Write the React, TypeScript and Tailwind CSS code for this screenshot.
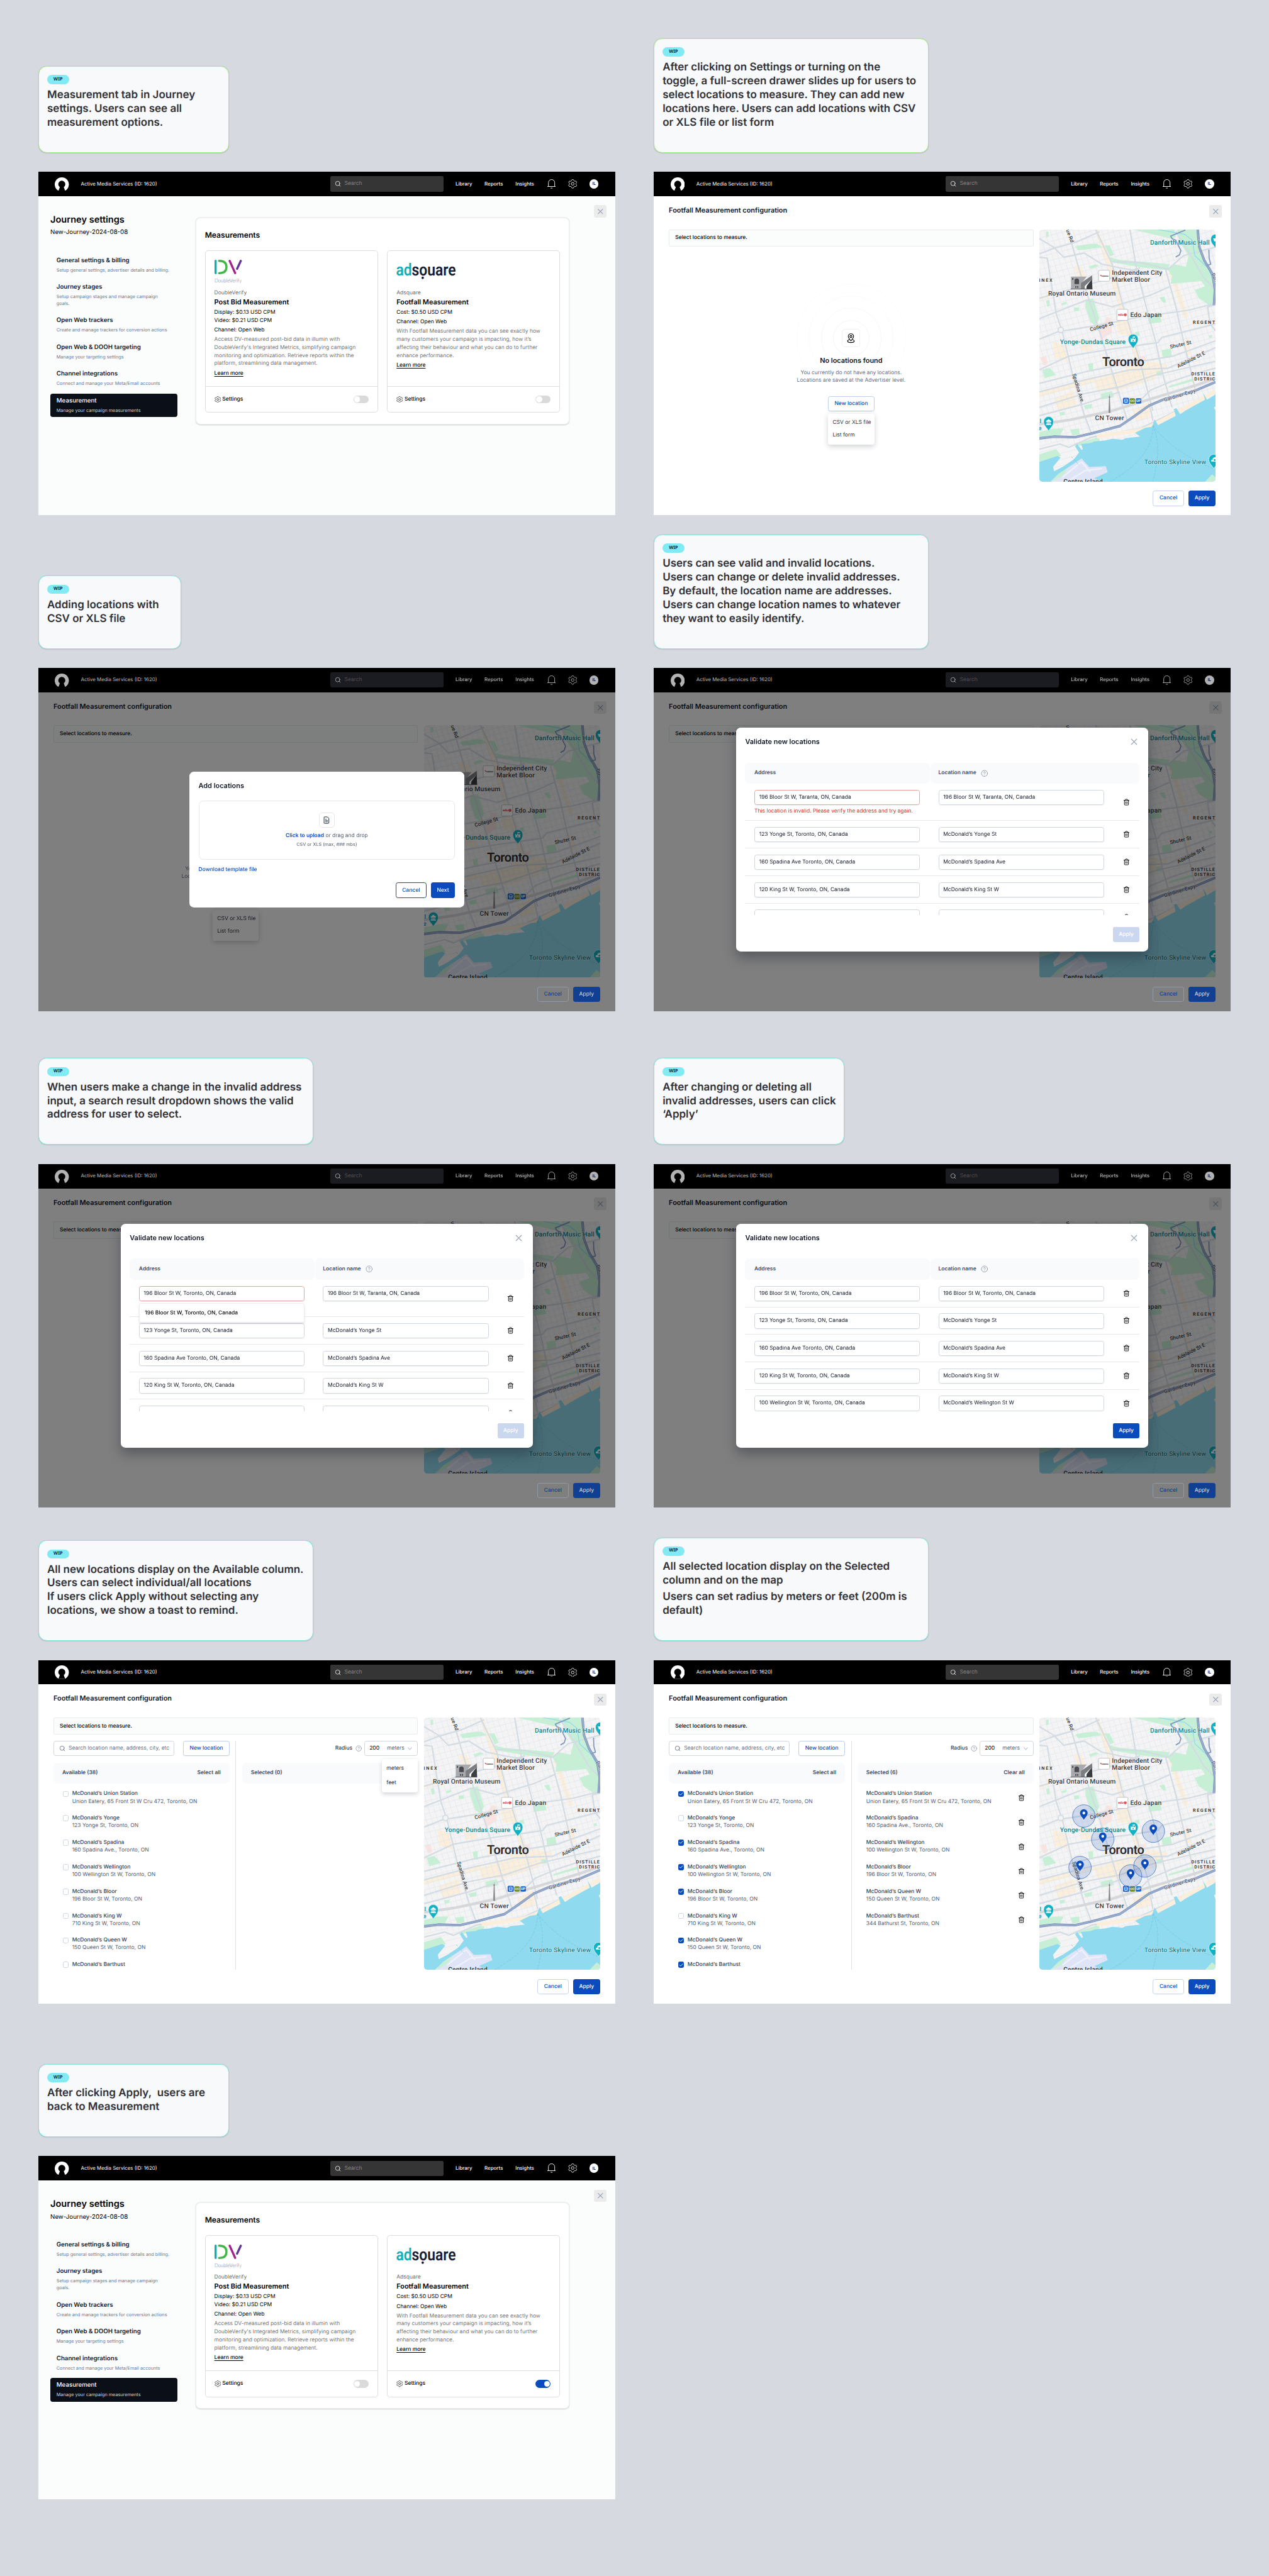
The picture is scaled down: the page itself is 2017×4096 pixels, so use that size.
import React from "react";
import { Check, ChevronDown, CircleHelp, Search, Trash2, X } from "lucide-react";

/* ---------- shared icons ---------- */

const gearPath =
  Array.from({ length: 72 }, (_, i) => {
    const a = (i / 72) * Math.PI * 2;
    const r = 9.9 + 1.5 * Math.tanh(1.8 * Math.cos(6 * a));
    return `${i ? "L" : "M"}${(12 + r * Math.sin(a)).toFixed(2)} ${(12 - r * Math.cos(a)).toFixed(2)}`;
  }).join("") + "Z";

function Gear({ className }: { className: string }) {
  return (
    <svg viewBox="0 0 24 24" fill="none" stroke="currentColor" strokeWidth="1.5" strokeLinejoin="round" className={className}>
      <path d={gearPath} />
      <circle cx="12" cy="12" r="3.6" />
    </svg>
  );
}

function Bell() {
  return (
    <svg viewBox="0 0 22 24" fill="none" stroke="currentColor" strokeWidth="1.5" className="h-6 w-[22px]">
      <path d="M2.8 19V9a8.2 8.2 0 0 1 16.4 0v10M0 19h22M8.5 23.2h5" />
    </svg>
  );
}

function Logo() {
  return (
    <svg viewBox="0 0 37 35" className="h-[35px] w-[37px]">
      <circle cx="18.5" cy="18.5" r="18.5" fill="#fff" />
      <circle cx="18.5" cy="18" r="9.2" fill="#000" />
      <path d="M14 24h9l4.5 12h-18z" fill="#000" />
    </svg>
  );
}

/* ---------- header ---------- */

function Header({ dim }: { dim?: boolean }) {
  const fade = dim ? "opacity-70" : "";
  return (
    <header className="flex h-16 shrink-0 items-center bg-black px-11 text-white">
      <div className={`flex items-center gap-[31px] ${fade}`}>
        <Logo />
        <span className="text-[13px]">Active Media Services (ID: 1620)</span>
      </div>
      <div className={`ml-auto flex h-10 w-[296px] items-center gap-2 rounded px-3 ${dim ? "bg-[#1b1c21] text-[#4d4d50]" : "bg-[#353535] text-[#858585]"}`}>
        <Search className={`size-[17px] text-white ${fade}`} strokeWidth={1.8} />
        <span className="text-sm">Search</span>
      </div>
      <nav className={`ml-8 flex items-center text-[13px] font-medium ${fade}`}>
        <span className="w-[43px]">Library</span>
        <span className="ml-[33px] w-[49px]">Reports</span>
        <span className="ml-8 w-[49px]">Insights</span>
        <span className="ml-[34px]"><Bell /></span>
        <Gear className="ml-[33px] size-6" />
        <span className="ml-8 flex size-6 items-center justify-center rounded-full bg-white text-[11px] text-black">IL</span>
      </nav>
    </header>
  );
}

function CloseButton() {
  return (
    <div className="flex size-8 items-center justify-center rounded-[5px] bg-[#ebebeb] text-[#94a1b5]">
      <X className="size-6" strokeWidth={1.9} />
    </div>
  );
}

/* ---------- notes ---------- */

function Note({ width, tone, children }: { width: string; tone: "green" | "cyan"; children: React.ReactNode }) {
  return (
    <div className={`${width} ${tone === "green" ? "border-[#a5e887]" : "border-[#80e8de]"} rounded-[22px] border-2 bg-[#f8f9fb] px-[22px] pt-[22px] pb-[58px] shadow-sm`}>
      <span className="flex h-6 w-[57px] items-center justify-center rounded-full bg-[#81ebf3] font-['Noto_Sans',sans-serif] text-xs font-bold text-[#0d2d38]">WIP</span>
      <div className="mt-3 flex flex-col gap-2 text-[28px] leading-9 font-semibold whitespace-nowrap text-[#303136]">{children}</div>
    </div>
  );
}

/* ---------- journey settings ---------- */

const menu = [
  ["General settings & billing", "Setup general settings, advertiser details and billing."],
  ["Journey stages", "Setup campaign stages and manage campaign goals."],
  ["Open Web trackers", "Create and manage trackers for conversion actions"],
  ["Open Web & DOOH targeting", "Manage your targeting settings"],
  ["Channel integrations", "Connect and manage your Meta/Email accounts"],
  ["Measurement", "Manage your campaign measurements"],
];

function DoubleVerifyLogo() {
  return (
    <svg viewBox="0 0 72 72" className="h-[72px] w-[72px] overflow-visible" fill="none" strokeWidth="5.6" strokeLinecap="round">
      <path d="M2.8 2.8v32.4" stroke="#10aeb0" />
      <path d="M11.8 2.8c13 0 19.4 5 19.4 16.2s-6.4 16.2-19.4 16.2" stroke="#43b649" />
      <path d="M39.6 2.8 54 35" stroke="#a3238e" />
      <path d="M68.8 2.8 59 24" stroke="#63359a" />
      <text x="0" y="59" fill="#6d6e71" fontSize="14" textLength="71" lengthAdjust="spacingAndGlyphs" className="font-['Lato'] font-light">DoubleVerify</text>
    </svg>
  );
}

function AdsquareLogo() {
  return (
    <svg viewBox="0 0 156 42" className="h-[42px] w-[156px] overflow-visible" aria-label="adsquare">
      <text x="-1" y="32" fontSize="44" textLength="157" lengthAdjust="spacingAndGlyphs" className="font-['Roboto'] font-semibold">
        <tspan fill="#10aeb9">ad</tspan>
        <tspan fill="#171c33">souare</tspan>
      </text>
      <circle cx="69" cy="37.5" r="3.2" fill="#171c33" />
    </svg>
  );
}

function Toggle({ on }: { on?: boolean }) {
  return (
    <span className={`flex h-5 w-10 items-center rounded-full p-0.5 ${on ? "justify-end bg-[#0a4bbd]" : "bg-[#dadada]"}`}>
      <span className="size-4 rounded-full bg-white" />
    </span>
  );
}

function ProductCard(props: { logo: React.ReactNode; vendor: string; title: string; prices: string[]; copy: string[]; on?: boolean }) {
  return (
    <article className="flex h-[425px] w-[455px] flex-col rounded-lg border border-[#dcdee2] bg-white">
      <div className="flex grow flex-col px-[23px] pt-[23px] text-sm leading-[21px]">
        <div className="flex h-[77px] items-start">{props.logo}</div>
        <p className="text-[#6d6d6d]">{props.vendor}</p>
        <h3 className="text-lg leading-[26px] font-semibold">{props.title}</h3>
        <div className="mt-1">{props.prices.map((p) => <p key={p}>{p}</p>)}</div>
        <p className="mt-1">Channel: Open Web</p>
        <div className="mt-1 whitespace-nowrap text-[#757575]">{props.copy.map((c) => <p key={c}>{c}</p>)}</div>
        <p className="mt-1 font-medium underline underline-offset-4">Learn more</p>
      </div>
      <div className="flex h-[68px] items-center justify-between border-t border-[#dcdee2] px-[23px]">
        <span className="flex items-center gap-1 text-sm font-medium"><Gear className="size-[17px]" />Settings</span>
        <Toggle on={props.on} />
      </div>
    </article>
  );
}

function JourneyScreen({ footfall }: { footfall?: boolean }) {
  return (
    <Frame>
      <div className="flex grow bg-[#fbfcfc]">
        <aside className="w-[364px] pt-[46px] pl-8">
          <h1 className="text-2xl leading-8 font-semibold">Journey settings</h1>
          <p className="mt-[7px] text-base leading-6">New-Journey-2024-08-08</p>
          <ul className="mt-[41px] flex flex-col gap-2">
            {menu.map(([title, text], i) => (
              <li key={title} className={`flex flex-col gap-1 rounded-md px-4 py-2 ${i === 5 ? "bg-[#0b0f18] text-white" : "text-[#11182b]"}`}>
                <span className={`text-base ${i === 5 ? "font-medium" : "font-semibold"}`}>{title}</span>
                <span className={`text-xs leading-[18px] ${i === 5 ? "text-[#cfd4dd]" : "text-[#6c7a94]"}`}>{text}</span>
              </li>
            ))}
          </ul>
        </aside>
        <section className="mt-[57px] ml-12 flex h-[541px] w-[980px] flex-col rounded-xl border border-[#eceef0] bg-white px-[23px] shadow-[0_1px_3px_rgba(16,24,40,0.2)]">
          <h2 className="mt-[31px] text-xl leading-7 font-semibold">Measurements</h2>
          <div className="mt-[25px] flex gap-6">
            <ProductCard
              logo={<DoubleVerifyLogo />}
              vendor="DoubleVerify"
              title="Post Bid Measurement"
              prices={["Display: $0.13 USD CPM", "Video: $0.21 USD CPM"]}
              copy={[
                "Access DV-measured post-bid data in illumin with",
                "DoubleVerify's Integrated Metrics, simplifying campaign",
                "monitoring and optimization. Retrieve reports within the",
                "platform, streamlining data management.",
              ]}
            />
            <ProductCard
              logo={<span className="pt-2.5"><AdsquareLogo /></span>}
              vendor="Adsquare"
              title="Footfall Measurement"
              prices={["Cost: $0.50 USD CPM"]}
              copy={[
                "With Footfall Measurement data you can see exactly how",
                "many customers your campaign is impacting, how it’s",
                "affecting their behaviour and what you can do to further",
                "enhance performance.",
              ]}
              on={footfall}
            />
          </div>
        </section>
        <div className="ml-auto pt-6 pr-6"><CloseButton /></div>
      </div>
    </Frame>
  );
}

/* ---------- map ---------- */

const pts = (s: string) =>
  s
    .split(" ")
    .map((p) => p.split(",").map(Number))
    .map(([x, y]) => `${((x - 68) / 3).toFixed(1)},${((y - 47) / 2.239).toFixed(1)}`)
    .join(" ");

const parks = [
  "1150,47 1300,47 1340,180 1452,330 1452,470 1400,490 1320,450 1290,400 1370,380 1340,350 1100,365 1110,320 1080,285 1120,250 1220,265 1240,200 1170,120",
  "620,210 700,225 1090,250 1080,285 880,270 640,240",
  "350,145 430,135 520,130 560,150 430,165 370,168",
  "580,140 620,140 655,195 625,205",
  "800,47 1130,47 1140,90 1100,100 960,75",
  "455,265 510,250 540,260 470,278",
  "430,460 490,450 540,570 510,610 470,590 430,500",
  "920,560 1010,530 1030,590 930,600",
  "1010,445 1050,440 1065,475 1040,475",
  "1030,755 1100,745 1110,790 1035,795",
  "990,880 1030,875 1030,905 990,905",
  "450,835 490,830 490,880 460,875",
  "90,870 150,860 200,900 110,920",
  "550,1010 640,995 655,1030 560,1045",
  "68,1235 180,1215 260,1215 230,1255 68,1265",
  "310,1220 380,1215 385,1250 330,1255",
  "68,1365 200,1335 240,1375 68,1415",
  "340,1310 540,1262 540,1292 350,1320",
  "820,650 850,645 855,670 825,675",
  "120,60 140,58 140,90 122,90",
  "415,1080 480,1070 480,1095 430,1100",
  "1085,965 1280,920 1280,935 1085,975",
  "240,480 280,470 280,485 245,492",
  "340,505 380,503 380,525 340,525",
  "120,465 145,460 150,495 130,500",
  "1400,670 1425,665 1425,680 1405,683",
  "225,1120 265,1115 268,1135 232,1138",
];
const shops = [
  "505,47 530,47 640,250 720,480 800,640 870,800 820,810 700,520 600,270",
  "670,590 745,580 765,660 690,665",
  "170,700 270,730 290,820 190,800",
  "340,270 400,265 440,330 380,345",
  "68,450 150,425 155,440 68,462",
  "1085,300 1125,300 1240,560 1205,570",
  "500,930 930,820 1080,840 960,930 700,990 520,990",
  "68,1000 500,910 510,940 68,1030",
  "180,1040 340,990 360,1070 220,1110",
  "800,1110 930,1060 940,1150 830,1170",
  "730,840 860,800 900,860 780,900",
  "380,690 470,720 480,760 400,760",
  "1190,700 1240,690 1260,780 1220,790",
];
const hospitals = ["540,640 600,560 630,565 640,650 560,690", "75,800 120,790 135,835 100,845", "860,795 900,790 905,815 870,820"];
const mainRoads = [
  "68,190 170,160 360,120 540,60",
  "68,100 180,150 260,210 420,185 560,250 720,275 860,290",
  "68,210 130,215 200,540 250,650 330,900 420,1130 480,1250",
  "290,47 400,330 540,640 660,930 760,1170",
  "510,47 640,250 720,480 850,800 960,1110",
  "780,47 830,270 900,480 980,700 1040,900 1110,1090",
  "1060,280 1140,500 1200,700 1260,880 1290,980",
  "640,235 860,240 1080,280 1200,200 1452,150",
  "68,450 300,400 640,330 860,270",
  "68,570 440,460 640,500 930,435 1100,380",
  "68,690 220,645 520,610 860,560 1240,520 1452,480",
  "68,870 300,790 620,750 820,730 1000,710 1030,680 1452,600",
  "68,1000 420,930 780,870 1080,860 1452,740",
  "68,950 440,880 780,830 1120,790 1452,700",
  "68,1090 420,1010 700,970 980,900 1452,820",
  "860,1050 940,990 1100,940 1300,890 1452,860",
  "1140,60 1250,190 1360,330 1452,400",
  "68,1335 230,1305 300,1325 480,1265 860,1215 1452,1000",
  "930,1070 950,1130 960,1170",
  "68,1140 420,1070 700,1000",
  "1452,330 1440,490 1390,500 1410,600 1452,640",
];
const waterfront =
  "68,1410 210,1375 235,1385 175,1440 185,1465 260,1435 340,1395 380,1355 350,1320 365,1305 400,1340 410,1335 395,1305 470,1300 500,1290 580,1285 640,1275 720,1280 750,1270 860,1262 820,1240 900,1210 950,1205 958,1195 975,1160 1000,1195 1140,1140 1125,1100 1145,1095 1175,1130 1215,1110 1370,1045 1355,1005 1385,1045 1452,1015 1452,1527 68,1527";
const expressway = "68,1272 180,1262 350,1265 470,1245 700,1200 800,1150 930,1080 1040,1045 1300,990 1452,942";
const parkway = "1312,47 1325,150 1365,230 1430,310 1448,400 1440,490";
const ramps = ["1215,50 1100,85 1110,100 1140,110 1180,170 1170,195 1140,208", "1400,165 1402,215 1415,250 1385,258"];
const islands = "155,1527 220,1480 400,1390 460,1440 590,1435 605,1470 500,1505 560,1527";

const crossStreets = Array.from({ length: 44 }, (_, i) => {
  const x = -480 + i * 45;
  return `${x},47 ${x + 230},600 ${x + 510},1300`;
});
const sideStreets = Array.from({ length: 40 }, (_, i) => {
  const y = 60 + i * 37;
  return `68,${y} 700,${y - 120} 1452,${y - 270}`;
});

function Lines({ items, color, width }: { items: string[]; color: string; width: number }) {
  return (
    <g fill="none" stroke={color} strokeWidth={width} strokeLinejoin="round">
      {items.map((s) => <polyline key={s} points={pts(s)} />)}
    </g>
  );
}
function Areas({ items, color }: { items: string[]; color: string }) {
  return <g fill={color}>{items.map((s) => <polygon key={s} points={pts(s)} />)}</g>;
}

function PlacePin({ x, y, children }: { x: number; y: number; children: React.ReactNode }) {
  return (
    <g transform={`translate(${x} ${y})`}>
      <path d="M0 24C-3 16-13 11-13-1a13 13 0 0 1 26 0C13 11 3 16 0 24Z" fill="#12b1c4" stroke="#fff" strokeWidth="1" />
      <g fill="#fff">{children}</g>
    </g>
  );
}

const teal = "#0f828f";
const ink = "#3a3b3f";
/* text, x, y, size, length, colour, rotation, weight */
const labels: [string, number, number, number, number, string, number, number][] = [
  ["Danforth Music Hall", 290, 39, 17, 156, teal, 0, 500],
  ["Independent City", 190, 118, 17, 132, ink, 0, 500],
  ["Market Bloor", 190, 137, 17, 100, ink, 0, 500],
  ["Royal Ontario Museum", 23, 173, 17, 177, ink, 0, 500],
  ["Edo Japan", 238, 229, 17, 82, ink, 0, 500],
  ["College St", 134, 267, 14, 63, ink, -16, 500],
  ["Yonge-Dundas Square", 54, 300, 17, 172, teal, 0, 500],
  ["Shuter St", 343, 312, 13.5, 57, ink, -13, 500],
  ["Adelaide St E", 364, 363, 13.5, 80, ink, -27, 500],
  ["Toronto", 165, 357, 33, 110, "#2b2c30", 0, 600],
  ["REGENT PARK", 402, 248, 12, 104, ink, 0, 700],
  ["ANNEX", -17, 136, 12, 51, ink, 0, 700],
  ["DISTILLERY", 398, 382, 12, 80, ink, 0, 700],
  ["DISTRICT", 406, 396, 12, 63, ink, 0, 700],
  ["Spadina Ave.", 86, 379, 13.5, 80, ink, 73, 500],
  ["Avenue Rd", 59, -28, 13.5, 67, ink, 70, 500],
  ["Gardiner Expy", 328, 451, 13.5, 86, "#4b5d80", -17, 500],
  ["Don Valley Pkwy", 450, 117, 13.5, 95, "#4b5d80", 64, 500],
  ["CN Tower", 146, 499, 17, 76, ink, 0, 500],
  ["Toronto Skyline View", 275, 614, 17, 162, teal, 0, 500],
  ["Centre Island", 63, 665, 17, 103, "#2b2c30", 0, 600],
  ["l", 1, 507, 16, 4, teal, 0, 500],
  ["e", -3, 525, 16, 8, teal, 0, 500],
];

const drops = [[116.5, 258], [166, 319], [298.5, 298], [106.5, 393], [276.5, 389], [239, 415]];

function CityMap({ pinned }: { pinned?: boolean }) {
  return (
    <div className="h-[661px] w-[461px] shrink-0 overflow-hidden rounded-lg">
      <svg viewBox="0 0 461 661" className="h-full w-full font-['Roboto',sans-serif]">
        <rect width="461" height="661" fill="#f5f4f4" />
        <Areas items={shops} color="#fbefdb" />
        <Areas items={hospitals} color="#fbe4e0" />
        <Lines items={crossStreets} color="#dfe5ee" width={1.1} />
        <Lines items={sideStreets} color="#dfe5ee" width={1.1} />
        <Areas items={parks} color="#c6efd6" />
        <Lines items={mainRoads} color="#d3dbe3" width={3.6} />
        <circle cx="56" cy="263" r="7" fill="#f5f4f4" stroke="#d3dbe3" strokeWidth="3" />
        <Lines items={["68,1190 300,1165 620,1115 860,1060 1300,960 1452,920"]} color="#d6d7da" width={7} />
        <Lines items={["1000,47 1210,75 1270,110 1290,200 1390,270 1452,370"]} color="#8fdaef" width={2} />
        <Lines items={["520,1262 860,1225 950,1200 1300,1060 1452,995"]} color="#fbefdb" width={10} />
        <polygon points={pts(waterfront)} fill="#90daef" />
        <polygon points={pts("1440,1090 1452,1085 1452,1110")} fill="#fbefdb" />
        <polygon points={pts(islands)} fill="#dfe5f6" />
        <Lines items={["250,1500 400,1410 470,1470", "300,1520 430,1460 560,1450"]} color="#eef1fa" width={4} />
        <Areas items={["1370,1527 1425,1483 1452,1500 1452,1527", "155,1527 220,1480 300,1440 240,1500"]} color="#c6efd6" />
        <g fill="none" stroke="#66c8e2" strokeWidth="1.2" strokeDasharray="6 3">
          <path d="M298 514C330 560 390 600 457 627M298 514C318 560 310 610 297 661M298 514C296 580 250 625 184 661M84 595l20 22" />
        </g>
        <Lines items={[expressway, parkway]} color="#7288b0" width={6.4} />
        <Lines items={[expressway, parkway]} color="#96abcc" width={4.6} />
        <Lines items={ramps} color="#8299c0" width={3} />

        <g>
          <path d="M83 156v-33h26l3 33zM106 156v-33l18 0-12 16z" fill="#a9aaad" />
          <path d="M92 143v-9a6 6 0 0 1 12 0v9zM86 127h3v5h-3zM94 148h3v5h-3zM99 148h3v5h-3z" fill="#4b4c50" />
          <path d="M109 140l29-20 1 12-14 14-6 10h-10z" fill="#7d7e82" />
          <path d="M121 156l2-11 15-13 1 24z" fill="#3c3d41" />
          <path d="M119 156v-8l17-16-12 16-1 8z" fill="#fff" />
          <path d="M82 156h57" stroke="#4b4c50" strokeWidth="1.5" />
        </g>
        <g fill="#fff" stroke="#a9adb5" strokeWidth="1.2">
          <rect x="155" y="106.5" width="29" height="29" rx="3" />
          <rect x="203" y="209" width="29" height="29" rx="3" />
        </g>
        <path d="M158.5 119h4v4z" fill="#dc2626" />
        <text x="163" y="123" fontSize="4.5" textLength="18" fontWeight="700" fill="#2f2f33">CityMarket</text>
        <text x="206.5" y="226" fontSize="8" textLength="14" fontWeight="700" fill="#dc2626">edo</text>
        <circle cx="225" cy="223.5" r="4" fill="#dc5a5a" />

        <path d="M183.700 423l1 14h2l-.5 4h-1l1.500 40h-6l1.500-40h-1l-.5-4h2z" fill="#88898c" stroke="#fff" strokeWidth=".6" />
        <g>
          <rect x="219" y="441" width="16" height="16" rx="3" fill="#1565d8" />
          <rect x="223" y="444.5" width="8" height="8" rx="1.5" fill="none" stroke="#fff" strokeWidth="1.5" />
          <path d="M223 449h8M224 455l1-2M230 455l-1-2" stroke="#fff" strokeWidth="1.3" />
          <rect x="236.5" y="442" width="14" height="14" rx="3" fill="#6b8f1c" />
          <circle cx="240.8" cy="449" r="2.2" fill="none" stroke="#fff" strokeWidth="1.3" />
          <circle cx="246.4" cy="449" r="2.2" fill="none" stroke="#fff" strokeWidth="1.3" />
          <rect x="252.5" y="442" width="14.5" height="14" rx="3" fill="#1565d8" />
          <text x="259.7" y="452.3" fontSize="9" fontWeight="700" fill="#fff" textAnchor="middle">UP</text>
        </g>

        {labels.map(([t, x, y, size, len, color, rot, weight]) => (
          <text
            key={t}
            transform={`translate(${x} ${y}) rotate(${rot})`}
            fontSize={size}
            fontWeight={weight}
            textLength={len}
            fill={color}
            stroke="#ffffff"
            strokeOpacity="0.7"
            strokeWidth="1.8"
            strokeLinejoin="round"
            paintOrder="stroke"
          >
            {t}
          </text>
        ))}

        <PlacePin x={245.7} y={288}><path d="M-6.5-3h2v2h3v-2h3v2h3v-2h2V6h-13zM-1-8h6v3H0v2h-1z" /><circle cy="3" r="1.8" fill="#12b1c4" /></PlacePin>
        <PlacePin x={24.3} y={504}><path d="M-7-2 0-7 7-2v2H-7zM-5 1H5v6H-5zM-7 6H7v2H-7z" /><path d="M-2.5 6V2L0 4.500 2.500 2v4" stroke="#12b1c4" strokeWidth="1.2" fill="none" /></PlacePin>
        <PlacePin x={462} y={26}><path d="M-7-3h9v8h-6z" /></PlacePin>
        <PlacePin x={457} y={603}><path d="M-3-4h2l1-2h5v11h-12V0h4z" /><circle cx="2" cy="1" r="2.5" fill="#12b1c4" /></PlacePin>

        {pinned &&
          drops.map(([x, y]) => (
            <g key={x} transform={`translate(${x} ${y})`}>
              <circle r="29.5" fill="#0a4bbd" fillOpacity="0.15" stroke="#0a4bbd" strokeWidth="1" />
              <path d="M0 10C-2 5-10-1-10-8a10 10 0 0 1 20 0C10-1 2 5 0 10Z" fill="#0a4bbd" />
              <circle cy="-8" r="3.6" fill="#fff" />
            </g>
          ))}
      </svg>
    </div>
  );
}

/* ---------- configuration drawer ---------- */

function Frame({ dim, children }: { dim?: boolean; children: React.ReactNode }) {
  return (
    <div className="relative mt-[50px] flex h-[900px] w-[1512px] flex-col overflow-hidden bg-white text-black">
      <Header dim={dim} />
      {children}
    </div>
  );
}

function ConfigScreen({ pinned, modal, children }: { pinned?: boolean; modal?: React.ReactNode; children?: React.ReactNode }) {
  const dim = Boolean(modal);
  return (
    <Frame dim={dim}>
      <div className="flex items-start justify-between pt-6 pr-6 pl-10">
        <h1 className="-mt-px text-lg leading-7 font-semibold text-[#101828]">Footfall Measurement configuration</h1>
        <CloseButton />
      </div>
      <div className="mt-[31px] flex h-[661px] gap-4 pl-10">
        <div className="flex w-[955px] flex-col">
          <div className="flex h-[45px] shrink-0 items-center rounded border border-[#e9ebed] bg-[#fbfcfc] px-[15px] text-sm font-medium">Select locations to measure.</div>
          {children ?? <EmptyState />}
        </div>
        <CityMap pinned={pinned} />
      </div>
      {dim && <div className="absolute inset-x-0 top-16 bottom-0 bg-black/50" />}
      <div className="relative mt-6 flex justify-end gap-3 pr-10">
        <span className={`flex h-10 items-center rounded-md border px-4 text-sm font-medium ${dim ? "border-[#9299a8] text-[#123f90]" : "border-[#c4d5f1] text-[#0a4bbd]"}`}>Cancel</span>
        <span className={`flex h-10 items-center rounded-md px-4 text-sm font-medium ${dim ? "bg-[#113f92] text-[#c8cdd8]" : "bg-[#0a4bbd] text-white"}`}>Apply</span>
      </div>
      {modal && <div className="absolute inset-0 flex items-center justify-center">{modal}</div>}
    </Frame>
  );
}

function EmptyState() {
  return (
    <div className="flex flex-col items-center">
      <div className="relative mt-[216px] flex size-12 items-center justify-center rounded-lg border border-[#eff1f4] bg-white">
        <span className="absolute -inset-[121px] rounded-full border border-[#fcfcfd]" />
        <span className="absolute -inset-[89px] rounded-full border border-[#fafbfb]" />
        <span className="absolute -inset-[57px] rounded-full border border-[#f7f8f9]" />
        <span className="absolute -inset-[25px] rounded-full border border-[#f4f5f7]" />
        <svg viewBox="0 0 24 24" className="size-7" fill="none" stroke="#000" strokeWidth="1.6" strokeLinejoin="round">
          <path d="M12 18.500C10.500 15.500 6 12.500 6 8.500a6 6 0 0 1 12 0c0 4-4.500 7-6 10Z" />
          <circle cx="12" cy="8.500" r="2.300" />
          <path d="M8.500 15.500C6 16.200 4.500 17.300 4.500 18.700c0 1.900 3.400 3.300 7.500 3.300s7.500-1.400 7.500-3.300c0-1.400-1.500-2.500-4-3.200" />
        </svg>
      </div>
      <h2 className="relative mt-[21px] text-lg leading-7 font-semibold text-[#101828]">No locations found</h2>
      <p className="relative mt-2 text-center text-sm text-[#667085]">
        You currently do not have any locations.
        <br />
        Locations are saved at the Advertiser level.
      </p>
      <div className="relative mt-[31px]">
        <NewLocation />
        <div className="absolute inset-x-0 top-[46px] flex h-[82px] flex-col rounded-md bg-white py-2 pl-3 text-sm whitespace-nowrap text-[#282f3d] shadow-[0_4px_14px_rgba(16,24,40,0.2)]">
          <span className="py-1.5 leading-[21px]">CSV or XLS file</span>
          <span className="py-1.5 leading-[21px]">List form</span>
        </div>
      </div>
    </div>
  );
}

function NewLocation() {
  return (
    <span className="flex h-10 w-[121px] items-center justify-center rounded-md border border-[#bccfee] bg-white text-sm font-medium text-[#0a4bbd] shadow-xs">
      New location
    </span>
  );
}

/* ---------- modals ---------- */

function UploadModal() {
  return (
    <div className="flex h-[357px] w-[720px] flex-col rounded-xl bg-white px-6 pt-6 text-sm">
      <h2 className="text-lg leading-7 font-semibold text-[#101828]">Add locations</h2>
      <div className="mt-6 flex h-[156px] flex-col items-center rounded-xl border border-[#e4e7ec] pt-[30px]">
        <span className="flex size-10 items-center justify-center rounded-lg border border-[#e4e7ec]">
          <svg viewBox="0 0 20 20" className="size-5" fill="none" stroke="#1f2937" strokeWidth="1.6" strokeLinejoin="round">
            <path d="M4.500 1.500h7.500l4 4v11a2 2 0 0 1-2 2h-9.500a1 1 0 0 1-1-1v-15a1 1 0 0 1 1-1zM6.500 7.500h3.500M6.500 11h7M6.500 14.500h7" />
          </svg>
        </span>
        <p className="mt-3 text-[#535c6e]"><b className="font-semibold text-[#0a4bd0]">Click to upload</b> or drag and drop</p>
        <p className="mt-1 text-xs leading-[18px] text-[#535c6e]">CSV or XLS (max, ### mbs)</p>
      </div>
      <p className="mt-4 font-medium text-[#0a4bbd]">Download template file</p>
      <div className="mt-[23px] flex justify-end gap-3 font-medium">
        <span className="flex h-[41px] items-center rounded-md border border-[#0a4bbd] px-[15px] text-[#0a4bbd]">Cancel</span>
        <span className="flex h-[41px] items-center rounded-md bg-[#0a4bbd] px-4 text-white">Next</span>
      </div>
    </div>
  );
}

function Field({ value, invalid }: { value: string; invalid?: boolean }) {
  return (
    <span className={`flex h-10 w-[434px] items-center rounded-md border px-[11px] text-sm text-[#101828] shadow-xs ${invalid ? "border-[#f0a09a]" : "border-[#d0d6e0]"}`}>
      {value}
    </span>
  );
}

const addresses = [
  ["123 Yonge St, Toronto, ON, Canada", "McDonald’s Yonge St"],
  ["160 Spadina Ave Toronto, ON, Canada", "McDonald’s Spadina Ave"],
  ["120 King St W, Toronto, ON, Canada", "McDonald’s King St W"],
];

function ValidateModal({ state }: { state: "error" | "editing" | "valid" }) {
  const ok = state === "valid";
  const first = [
    state === "error" ? "196 Bloor St W, Taranta, ON, Canada" : "196 Bloor St W, Toronto, ON, Canada",
    ok ? "196 Bloor St W, Toronto, ON, Canada" : "196 Bloor St W, Taranta, ON, Canada",
  ];
  const last = ok ? ["100 Wellington St W, Toronto, ON, Canada", "McDonald’s Wellington St W"] : ["", ""];
  return (
    <div className="flex h-[587px] w-[1080px] flex-col rounded-xl bg-white p-6 shadow-[0_16px_32px_rgba(16,24,40,0.35)]">
      <div className="flex items-center justify-between">
        <h2 className="text-lg leading-7 font-semibold text-[#101828]">Validate new locations</h2>
        <X className="size-7 text-[#94a1b5]" strokeWidth={1.6} />
      </div>
      <div className="mt-10 flex h-[55px] shrink-0 gap-0.5 text-sm font-semibold text-[#475069]">
        <span className="flex w-[484px] items-center rounded-xl bg-[#f9fafc] pl-6">Address</span>
        <span className="flex grow items-center gap-3 rounded-xl bg-[#f9fafc] pl-5">Location name <CircleHelp className="size-[19px] text-[#8a94a8]" strokeWidth={1.8} /></span>
      </div>
      <div className="h-[344px] shrink-0 overflow-hidden">
        {[first, ...addresses, last].map(([address, name], i) => {
          const flagged = i === 0 && !ok;
          return (
            <div key={address + i} className={`relative flex border-[#e6e9ee] px-6 ${flagged ? "h-[98px]" : "h-[72px]"} ${i < 4 ? "border-b" : ""}`}>
              <div className="relative mt-4 w-[485px]">
                <Field value={address} invalid={flagged} />
                {flagged && state === "error" && (
                  <p className="mt-1.5 text-sm text-[#e0322b]">This location is invalid. Please verify the address and try again.</p>
                )}
                {flagged && state === "editing" && (
                  <div className="absolute top-[46px] left-0 z-10 flex h-[50px] w-[434px] items-center rounded border border-[#eceef2] bg-white pl-3.5 text-sm font-medium shadow-md">
                    196 Bloor St W, Toronto, ON, Canada
                  </div>
                )}
              </div>
              <div className="mt-4 -ml-[3px]"><Field value={name} /></div>
              <Trash2 className="mr-[1px] ml-auto size-[18px] self-center" strokeWidth={2} />
            </div>
          );
        })}
      </div>
      <span className={`mt-8 flex h-10 w-[68px] items-center justify-center self-end rounded text-sm font-medium text-white ${ok ? "bg-[#0a4bbd]" : "bg-[#cbd7ef]"}`}>Apply</span>
    </div>
  );
}

/* ---------- location lists ---------- */

const places: [string, string, boolean][] = [
  ["McDonald’s Union Station", "Union Eatery, 65 Front St W Cru 472, Toronto, ON", true],
  ["McDonald’s Yonge", "123 Yonge St, Toronto, ON", false],
  ["McDonald’s Spadina", "160 Spadina Ave., Toronto, ON", true],
  ["McDonald’s Wellington", "100 Wellington St W, Toronto, ON", true],
  ["McDonald’s Bloor", "196 Bloor St W, Toronto, ON", true],
  ["McDonald’s King W", "710 King St W, Toronto, ON", false],
  ["McDonald’s Queen W", "150 Queen St W, Toronto, ON", true],
  ["McDonald’s Barthust", "344 Bathurst St, Toronto, ON", true],
];

function ListHeader({ title, action }: { title: string; action?: string }) {
  return (
    <div className="mt-[17px] flex h-[55px] shrink-0 items-center justify-between rounded-xl bg-[#f9fafc] px-[23px] text-sm font-semibold text-[#414a5e]">
      <span>{title}</span>
      <span>{action}</span>
    </div>
  );
}

function Place({ name, address }: { name: string; address?: string }) {
  return (
    <div className="text-sm">
      <p className="font-medium text-[#344054]">{name}</p>
      {address && <p className="text-[#535c6e]">{address}</p>}
    </div>
  );
}

function Lists({ selected }: { selected?: boolean }) {
  return (
    <div className="mt-4 flex h-[600px]">
      <div className="flex w-[461px] flex-col">
        <div className="flex justify-between">
          <span className="flex h-10 w-[317px] items-center gap-2 rounded-md border border-[#d0d6e0] px-[13px] text-sm whitespace-nowrap text-[#667085]">
            <Search className="size-[17px] shrink-0" strokeWidth={2} />Search location name, address, city, etc
          </span>
          <NewLocation />
        </div>
        <ListHeader title="Available (38)" action="Select all" />
        <div className="mt-[5px] pl-6">
          {places.map(([name, address, on], i) => (
            <div key={name} className={`flex gap-[9px] pt-3 ${i === 7 ? "h-8" : "h-16"}`}>
              <span className={`mt-0.5 flex size-4 shrink-0 items-center justify-center rounded-[4px] ${on && selected ? "bg-[#0a4bbd] text-white" : "border border-[#d0d6e0] bg-white"}`}>
                {on && selected && <Check className="size-3" strokeWidth={3} />}
              </span>
              <Place name={name} address={i === 7 ? undefined : address} />
            </div>
          ))}
        </div>
      </div>
      <div className="mx-4 w-px bg-[#e0e2e7]" />
      <div className="flex w-[461px] flex-col">
        <div className="flex h-10 items-center justify-end text-sm">
          <span className="font-medium text-[#344054]">Radius</span>
          <CircleHelp className="mr-1.5 ml-2 size-[17px] text-[#8a94a8]" strokeWidth={1.8} />
          <div className="relative flex h-10 w-[141px] items-center rounded-md border border-[#d0d6e0] pl-3">
            <span className="w-[46px]">200</span>
            <span className="text-[#535c6e]">meters</span>
            <ChevronDown className="ml-1.5 size-[18px] text-[#8a94a8]" strokeWidth={2} />
            {!selected && (
              <div className="absolute top-[46px] -right-px z-10 flex h-[88px] w-[94px] flex-col justify-between rounded-md bg-white px-3 pt-2.5 pb-4 text-[#1d2636] shadow-[0_4px_10px_rgba(16,24,40,0.18)]">
                <span className="pt-1">meters</span>
                <span>feet</span>
              </div>
            )}
          </div>
        </div>
        <ListHeader title={selected ? "Selected (6)" : "Selected (0)"} action={selected ? "Clear all" : undefined} />
        {selected && (
          <div className="mt-[5px] px-[23px]">
            {places.filter((p) => p[2]).map(([name, address]) => (
              <div key={name} className="flex h-16 items-center justify-between">
                <Place name={name} address={address} />
                <Trash2 className="size-[18px]" strokeWidth={2} />
              </div>
            ))}
          </div>
        )}
      </div>
    </div>
  );
}

/* ---------- board ---------- */

function Step({ note, first, children }: { note: React.ReactNode; first?: boolean; children: React.ReactNode }) {
  return (
    <section>
      <div className={`flex items-end ${first ? "h-[400px]" : "h-[350px]"}`}>{note}</div>
      {children}
    </section>
  );
}

export default function App() {
  return (
    <div className="min-h-[4096px] w-full overflow-hidden bg-[#d6d9df]">
      <main className="flex h-[6750px] w-[3324px] gap-[100px] bg-[#d6d9df] px-[100px] font-['Inter',sans-serif] [text-rendering:geometricPrecision] [zoom:0.60681]">
        <div className="w-[1512px]">
          <Step first note={<Note width="w-[500px]" tone="green"><p>Measurement tab in Journey<br />settings. Users can see all<br />measurement options.</p></Note>}>
            <JourneyScreen />
          </Step>
          <Step note={<Note width="w-[375px]" tone="cyan"><p>Adding locations with<br />CSV or XLS file</p></Note>}>
            <ConfigScreen modal={<UploadModal />} />
          </Step>
          <Step note={<Note width="w-[720px]" tone="cyan"><p>When users make a change in the invalid address<br />input, a search result dropdown shows the valid<br />address for user to select.</p></Note>}>
            <ConfigScreen modal={<ValidateModal state="editing" />} />
          </Step>
          <Step note={<Note width="w-[720px]" tone="cyan"><p>All new locations display on the Available column.<br />Users can select individual/all locations<br />If users click Apply without selecting any<br />locations, we show a toast to remind.</p></Note>}>
            <ConfigScreen><Lists /></ConfigScreen>
          </Step>
          <Step note={<Note width="w-[500px]" tone="cyan"><p>After clicking Apply,&nbsp; users are<br />back to Measurement</p></Note>}>
            <JourneyScreen footfall />
          </Step>
        </div>
        <div className="w-[1512px]">
          <Step first note={<Note width="w-[720px]" tone="green"><p>After clicking on Settings or turning on the<br />toggle, a full-screen drawer slides up for users to<br />select locations to measure. They can add new<br />locations here. Users can add locations with CSV<br />or XLS file or list form</p></Note>}>
            <ConfigScreen />
          </Step>
          <Step note={<Note width="w-[720px]" tone="cyan"><p>Users can see valid and invalid locations.<br />Users can change or delete invalid addresses.<br />By default, the location name are addresses.<br />Users can change location names to whatever<br />they want to easily identify.</p></Note>}>
            <ConfigScreen modal={<ValidateModal state="error" />} />
          </Step>
          <Step note={<Note width="w-[500px]" tone="cyan"><p>After changing or deleting all<br />invalid addresses, users can click<br />‘Apply’</p></Note>}>
            <ConfigScreen modal={<ValidateModal state="valid" />} />
          </Step>
          <Step note={<Note width="w-[720px]" tone="cyan"><p>All selected location display on the Selected<br />column and on the map</p><p>Users can set radius by meters or feet (200m is<br />default)</p></Note>}>
            <ConfigScreen pinned><Lists selected /></ConfigScreen>
          </Step>
        </div>
      </main>
    </div>
  );
}
